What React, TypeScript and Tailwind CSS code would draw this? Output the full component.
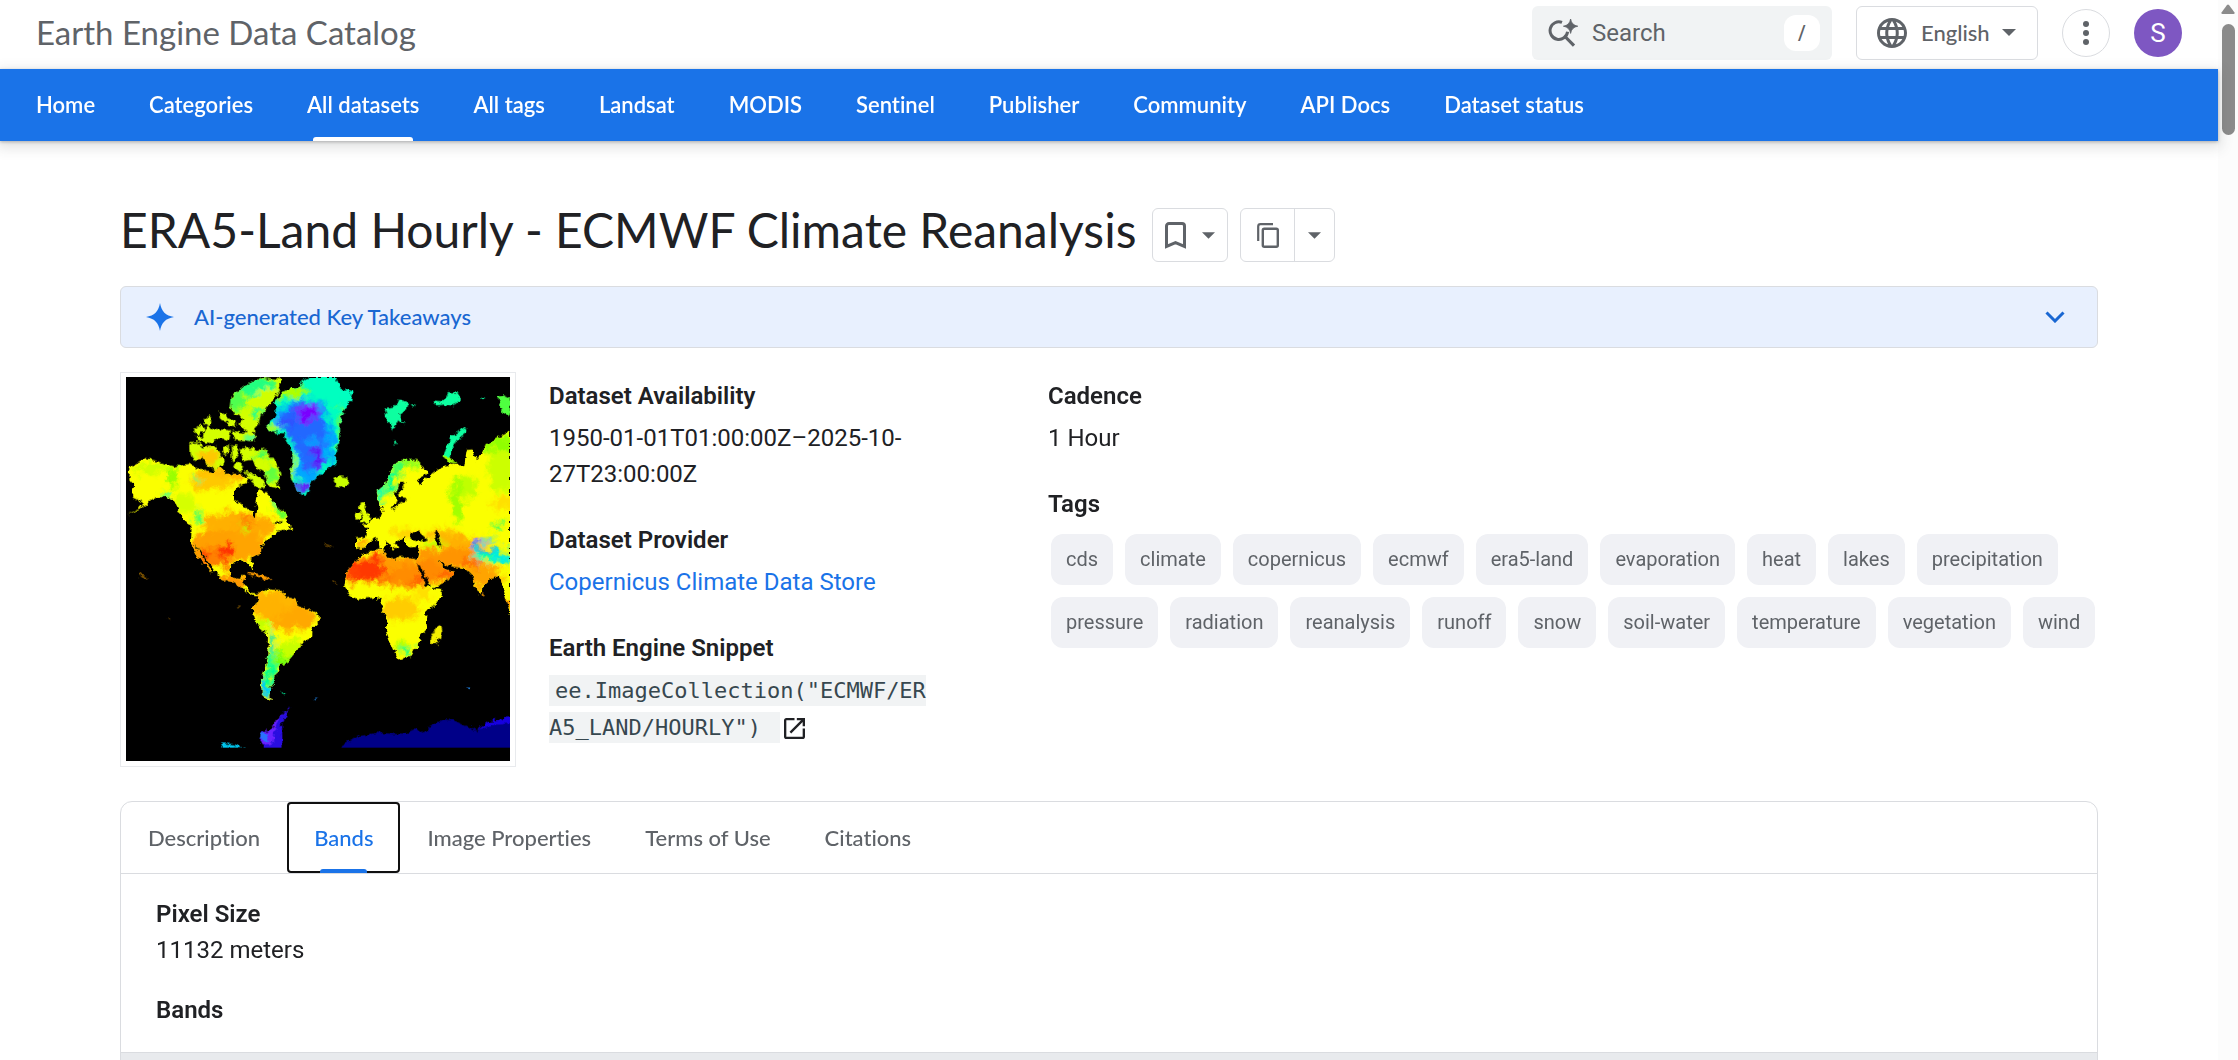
import React from "react";

const navItems = [
  "Home",
  "Categories",
  "All datasets",
  "All tags",
  "Landsat",
  "MODIS",
  "Sentinel",
  "Publisher",
  "Community",
  "API Docs",
  "Dataset status",
];

const tags = [
  "cds",
  "climate",
  "copernicus",
  "ecmwf",
  "era5-land",
  "evaporation",
  "heat",
  "lakes",
  "precipitation",
  "pressure",
  "radiation",
  "reanalysis",
  "runoff",
  "snow",
  "soil-water",
  "temperature",
  "vegetation",
  "wind",
];

const tabs = ["Description", "Bands", "Image Properties", "Terms of Use", "Citations"];

function Caret({ className = "w-[14px] h-[7px]" }: { className?: string }) {
  return (
    <svg viewBox="0 0 14 7" className={className} fill="#5f6368" aria-hidden="true">
      <path d="M0 0h14L7 7z" />
    </svg>
  );
}

function SearchSparkIcon() {
  return (
    <svg viewBox="0 0 30 28" className="h-7 w-[30px]" fill="none" aria-hidden="true">
      <path d="M14 3.400A8.800 8.800 0 1 0 19.600 12.800" stroke="#5f6368" strokeWidth="3" />
      <path d="M16.500 17l9.500 9.700" stroke="#5f6368" strokeWidth="3.200" />
      <path d="M22.600 0Q23.600 6.200 29.800 7.200 23.600 8.200 22.600 14.400 21.600 8.200 15.400 7.200 21.600 6.200 22.600 0z" fill="#5f6368" stroke="#5f6368" strokeWidth=".8" />
    </svg>
  );
}

function GlobeIcon() {
  return (
    <svg viewBox="2 2 20 20" className="h-[30px] w-[30px]" fill="#5f6368" aria-hidden="true">
      <path d="M11.99 2C6.47 2 2 6.48 2 12s4.47 10 9.99 10C17.52 22 22 17.52 22 12S17.52 2 11.99 2zm6.93 6h-2.95c-.32-1.25-.78-2.45-1.38-3.56 1.84.63 3.37 1.91 4.33 3.56zM12 4.04c.83 1.2 1.48 2.53 1.91 3.96h-3.82c.43-1.43 1.08-2.76 1.91-3.96zM4.26 14C4.1 13.36 4 12.69 4 12s.1-1.36.26-2h3.38c-.08.66-.14 1.32-.14 2s.06 1.34.14 2H4.26zm.82 2h2.95c.32 1.25.78 2.45 1.38 3.56-1.84-.63-3.37-1.9-4.33-3.56zm2.95-8H5.08c.96-1.66 2.49-2.93 4.33-3.56C8.81 5.55 8.35 6.75 8.03 8zM12 19.96c-.83-1.2-1.48-2.53-1.91-3.96h3.82c-.43 1.43-1.08 2.76-1.91 3.96zM14.34 14H9.66c-.09-.66-.16-1.32-.16-2s.07-1.35.16-2h4.68c.09.65.16 1.32.16 2s-.07 1.34-.16 2zm.25 5.56c.6-1.11 1.06-2.31 1.38-3.56h2.95c-.96 1.65-2.49 2.93-4.33 3.56zM16.36 14c.08-.66.14-1.32.14-2s-.06-1.34-.14-2h3.38c.16.64.26 1.31.26 2s-.1 1.36-.26 2h-3.38z" />
    </svg>
  );
}

const NORTH_AMERICA =
  "M60 330L72 312 105 294 150 305 190 320 235 312 270 325 300 338 330 322 352 345 385 340 400 352 425 348 412 368 385 378 372 400 372 418 392 432 412 445 425 452 428 474 438 474 442 445 436 425 442 405 446 390 465 395 482 412 500 440 520 455 535 472 522 484 500 484 488 492 512 490 525 480 548 508 530 508 505 512 490 530 468 540 455 560 452 580 430 592 422 600 432 625 424 630 414 606 392 604 365 612 358 625 362 652 378 660 398 645 404 648 396 668 412 680 420 698 440 700 458 694 448 708 430 708 408 695 395 680 368 668 335 655 320 640 308 620 285 590 262 560 250 548 308 635 302 636 262 585 243 550 245 500 228 490 212 462 198 432 172 410 140 412 118 424 90 448 48 468 84 448 102 428 66 410 72 375 58 358z";

const SOUTH_AMERICA =
  "M448 702L470 688 508 690 530 712 556 718 562 738 595 748 626 765 625 785 608 805 606 835 572 850 562 870 532 905 512 912 510 935 492 950 494 965 480 985 478 1010 492 1022 474 1022 456 1005 452 975 462 935 472 885 474 825 446 800 430 768 430 745 442 722z";

const GREENLAND =
  "M492 130L520 92 575 80 570 65 600 52 680 52 690 85 728 98 715 135 700 150 690 200 690 250 676 275 678 315 650 328 622 352 602 370 590 412 572 402 556 378 542 355 545 330 548 290 532 250 520 220 492 218 468 205 478 185 500 165z";

const EURASIA =
  "M738 535L768 530 772 505 758 500 790 475 812 470 818 455 805 430 800 395 828 370 850 315 882 298 915 300 955 335 945 350 920 358 928 375 968 342 990 325 1030 310 1062 320 1070 270 1090 268 1100 300 1125 260 1160 235 1200 215V765L1185 705 1168 645 1140 660 1120 680 1110 706 1098 685 1090 650 1065 625 1030 620 1005 612 985 600 1002 628 1032 635 1020 660 965 685 948 665 925 610 922 590 928 560 900 562 885 550 885 530 850 550 870 562 848 568 838 550 812 530 832 545 830 555 812 568 808 545 795 530 775 548 762 565 738 570z";

const AFRICA =
  "M758 585L790 572 822 568 826 585 858 600 870 590 922 600 940 640 965 685 998 690 985 725 950 752 948 780 952 805 930 830 925 852 905 890 862 898 845 860 828 812 830 770 815 745 815 720 800 712 742 718 715 700 703 680 710 635 730 610z";

const ARCTIC_CANADA =
  "M432 60L455 52 512 58 510 85 485 125 468 150 452 165 445 195 432 210 436 240 412 230 402 210 385 195 400 175 362 150 365 110 385 90zM280 180l20-15 8 25-20 12zM322 155l24 5 10 25-22-5zM352 175l24 4 2 20-22-4zM250 210l25-18 12 20-25 14zM290 200l35 8 35 2-5 32-25-8-30 15-35-5-12-16 28 2zM365 212l34 6 32 10 4 16-58-6zM240 250l22-4 15 16 42-4 12 25 14 25-28 24-28-15-5-22-20 4-12 4-10-22zM338 258l18-2 2 28-18-4zM365 258l14-6 8 26-18 28zM392 265l40-2 18 12 14-10 22 30 20 28 6 25-12 16 8 22-22-5-16-18-6-22-26-20-14-22-26 6zM380 305l16 8-4 24-20-14zM405 330l34 16 32 30-20 12-30-26zM440 52l6 40-20 30z";

function MapImage() {
  const cells: [number, number, number, number, string][] = [
    [330, 345, 70, 28, "#ffb800"],
    [300, 365, 60, 28, "#ffc800"],
    [370, 490, 90, 34, "#ffb000"],
    [430, 500, 60, 32, "#ffaa00"],
    [340, 560, 110, 48, "#ffa000"],
    [410, 560, 60, 40, "#ffa400"],
    [300, 590, 45, 30, "#ff8000"],
    [348, 572, 22, 18, "#ff3000"],
    [350, 610, 14, 20, "#ff5500"],
    [282, 585, 18, 10, "#ff4000"],
    [370, 660, 60, 20, "#ff9600"],
    [410, 485, 18, 8, "#ff7300"],
    [402, 502, 12, 8, "#b8ff00"],
    [130, 325, 50, 20, "#d0ff00"],
    [188, 345, 12, 38, "#90ff00"],
    [170, 402, 16, 8, "#20ffa0"],
    [225, 430, 30, 30, "#d5ff00"],
    [265, 470, 14, 22, "#50ff60"],
    [258, 355, 10, 8, "#60ff60"],
    [512, 445, 18, 32, "#60ff30"],
    [498, 425, 12, 14, "#20ffa0"],
    [520, 735, 110, 48, "#ffb600"],
    [550, 775, 80, 34, "#ffa800"],
    [480, 745, 50, 34, "#ffb200"],
    [545, 865, 45, 26, "#c8ff00"],
    [515, 905, 35, 26, "#70ff10"],
    [462, 795, 20, 14, "#c0ff00"],
    [484, 850, 7, 48, "#00e0d0"],
    [478, 940, 14, 60, "#00ff90"],
    [466, 985, 14, 28, "#00c8ff"],
    [482, 1018, 9, 7, "#2070ff"],
    [820, 625, 130, 46, "#ff9c00"],
    [900, 650, 70, 34, "#ff8c00"],
    [770, 630, 54, 30, "#ff3800"],
    [800, 595, 18, 14, "#ff3c00"],
    [735, 648, 26, 22, "#ff4000"],
    [820, 662, 30, 12, "#ff7200"],
    [920, 665, 24, 12, "#ff6400"],
    [870, 745, 60, 36, "#ffcc00"],
    [940, 705, 25, 20, "#ffe000"],
    [980, 625, 60, 40, "#ff8a00"],
    [1000, 648, 26, 8, "#ff5c00"],
    [955, 580, 36, 20, "#ff9800"],
    [1040, 590, 70, 32, "#ff9400"],
    [1085, 610, 32, 12, "#ff6c00"],
    [1120, 650, 60, 36, "#ffa400"],
    [1060, 545, 90, 18, "#ffb000"],
    [1000, 520, 50, 14, "#ffc000"],
    [890, 520, 50, 10, "#ffd000"],
    [760, 552, 20, 14, "#ffae00"],
    [1180, 430, 40, 20, "#ffe000"],
    [1040, 420, 17, 70, "#a0ff00"],
    [1075, 385, 26, 34, "#c0ff00"],
    [1180, 310, 45, 90, "#ccff00"],
    [1170, 250, 50, 24, "#90ff00"],
    [965, 550, 40, 9, "#c0ff00"],
    [860, 330, 18, 30, "#40ff60"],
    [838, 365, 14, 32, "#00ff90"],
    [812, 400, 16, 24, "#20ffa0"],
    [895, 310, 30, 14, "#80ff20"],
    [880, 862, 30, 20, "#b0ff00"],
    [892, 868, 17, 14, "#30ff70"],
    [1150, 590, 60, 18, "#00ffb0"],
    [1180, 592, 36, 18, "#00f0e0"],
    [1125, 575, 40, 6, "#20a0ff"],
    [1100, 558, 15, 10, "#3070ff"],
    [1130, 540, 34, 6, "#00d8f0"],
    [1165, 498, 18, 9, "#30ff60"],
  ];
  return (
    <svg
      viewBox="48 51 1152 1152"
      className="block aspect-square w-full bg-black"
      role="img"
      aria-label="World map of surface temperature"
    >
      <defs>
        <filter id="coast" x="0" y="0" width="1250" height="1250" filterUnits="userSpaceOnUse">
          <feTurbulence type="fractalNoise" baseFrequency="0.06" numOctaves="3" seed="4" result="n" />
          <feDisplacementMap in="SourceGraphic" in2="n" scale="20" xChannelSelector="R" yChannelSelector="G" />
          <feGaussianBlur stdDeviation="1.2" />
        </filter>
        <filter id="soft" x="0" y="0" width="1250" height="1250" filterUnits="userSpaceOnUse">
          <feGaussianBlur stdDeviation="6" result="b" />
          <feTurbulence type="fractalNoise" baseFrequency="0.035" numOctaves="4" seed="9" result="n" />
          <feDisplacementMap in="b" in2="n" scale="50" xChannelSelector="R" yChannelSelector="G" />
        </filter>
        <clipPath id="land">
          <path d={NORTH_AMERICA} />
          <path d={SOUTH_AMERICA} />
          <path d={EURASIA} />
          <path d={AFRICA} />
        </clipPath>
        <clipPath id="greenland">
          <path d={GREENLAND} />
        </clipPath>
        <clipPath id="arctic">
          <path d={ARCTIC_CANADA} />
        </clipPath>
      </defs>
      <g filter="url(#coast)">
        <g clipPath="url(#land)">
          <rect x="0" y="0" width="1250" height="1250" fill="#fbff00" />
          <g filter="url(#soft)">
            {cells.map(([cx, cy, rx, ry, fill], i) => (
              <ellipse key={i} cx={cx} cy={cy} rx={rx} ry={ry} fill={fill} />
            ))}
          </g>
        </g>
        <g clipPath="url(#arctic)">
          <rect x="200" y="40" width="350" height="400" fill="#d4ff00" />
          <g filter="url(#soft)">
            <ellipse cx="440" cy="80" rx="60" ry="30" fill="#20ff80" />
            <ellipse cx="380" cy="130" rx="22" ry="40" fill="#50ff50" />
            <ellipse cx="470" cy="110" rx="30" ry="20" fill="#d0ff00" />
            <ellipse cx="440" cy="160" rx="14" ry="20" fill="#20ff90" />
            <ellipse cx="425" cy="235" rx="22" ry="9" fill="#40ffa0" />
            <ellipse cx="300" cy="290" rx="40" ry="28" fill="#ffc800" />
            <ellipse cx="460" cy="285" rx="20" ry="14" fill="#30ff60" />
            <ellipse cx="490" cy="340" rx="20" ry="22" fill="#60ff40" />
          </g>
        </g>
        <g clipPath="url(#greenland)">
          <rect x="440" y="40" width="300" height="400" fill="#00ffc0" />
          <g filter="url(#soft)">
            <ellipse cx="530" cy="95" rx="60" ry="22" fill="#b0ff00" />
            <ellipse cx="485" cy="205" rx="26" ry="16" fill="#a0ff20" />
            <ellipse cx="695" cy="210" rx="10" ry="80" fill="#70ff40" />
            <ellipse cx="545" cy="330" rx="10" ry="55" fill="#c0ff00" />
            <path d="M505 150L550 120 635 125 660 190 676 250 662 300 625 345 590 380 560 345 562 290 540 230 490 190z" fill="#00a8ff" />
            <path d="M505 170L560 125 630 140 648 210 648 310 600 345 580 300 550 250 510 200z" fill="#2468ff" />
            <ellipse cx="605" cy="245" rx="28" ry="14" fill="#1098ff" />
            <ellipse cx="594" cy="158" rx="34" ry="24" fill="#7a00ff" />
            <ellipse cx="622" cy="295" rx="16" ry="36" fill="#5a18f8" />
            <ellipse cx="530" cy="185" rx="24" ry="16" fill="#3050ff" />
            <ellipse cx="580" cy="384" rx="16" ry="14" fill="#6a10ff" />
          </g>
        </g>
        {/* Arctic islands */}
        <g fill="#10ffa0">
          <path d="M824 145L850 140 868 122 895 132 890 150 868 160 884 195 862 180 848 210 832 185z" />
          <path d="M970 122l30 2 12-28 30 2 12 20-30 22-22-6-24 2z" />
          <path d="M1072 205L1045 215 1022 228 1012 262 1000 290 1018 300 1026 262 1040 240 1070 218z" />
          <path d="M1165 110l20-4 15 8v52l-20-10-10-24z" fill="#50ff40" />
          <path d="M995 285l24 10 28 16-30-4z" fill="#a0ff00" />
          <path d="M905 130l14 6-8 4zM1115 108l8 8-8 4zM852 242l10 8-8 4z" />
        </g>
        {/* Iceland, Britain and Ireland */}
        <path d="M675 355l14-6 22 2 8 12-12 16-22 4-14-16z" fill="#c8ff00" />
        <path d="M735 462l18-6 2 16-18 8zM752 428l14-4-2 24 16 24-2 14-28 4 10-20-10-20z" fill="#e4ff00" />
        {/* Madagascar, Caribbean, Sri Lanka and Indonesia */}
        <path d="M990 795l4 18-14 38-18 2 2-26 14-24z" fill="#f4f000" />
        <path d="M415 636l40 8 30 14-20 2-26-12-22-6zM1116 695l12 14-8 4zM1184 715l16 8v30z" fill="#ff9d00" />
        <path d="M88 638l22 14-6 6-16-12zM640 550l28 8-2 4-24-8zM668 660l12 10-6 2zM380 738l14 4-8 4zM170 776l12 2-6 3z" fill="#7a5200" />
        {/* Inland seas and gulfs */}
        <g fill="#000">
          <path d="M878 362l6 16-18 20 6 14 24 2-12 10-18 6-14 22-4-6 12-26-6-22z" />
          <path d="M902 518l22-4 28 24-20 6-30-4z" />
          <path d="M970 512l18 4-2 20 10 24-18-8-4-20z" />
          <path d="M922 610l12 12 26 56-10 2-24-50z" />
        </g>
        {/* Antarctica */}
        <path d="M692 1161L740 1130 800 1118 880 1124 920 1106 942 1120 962 1098 1000 1078 1030 1080 1072 1100 1100 1115 1140 1085 1200 1072 1230 1072 1230 1180H692z" fill="#000088" />
        <path d="M1100 1112L1140 1083 1185 1076 1190 1064 1205 1078V1086L1150 1092z" fill="#1800e0" />
        <path d="M540 1046L520 1056 500 1085 486 1108 455 1118 448 1140 462 1158 462 1175 518 1175 516 1090z" fill="#2a10e0" />
        <path d="M538 1048L510 1068 496 1102 488 1150 458 1156 450 1135 470 1110 488 1100 500 1078z" fill="#6a20ff" />
        <path d="M452 1118l26 4-6 22-22-6z" fill="#2c70ff" />
        <path d="M330 1165l8-15 30 2 36 13z" fill="#00c8f0" />
        <path d="M514 996l14 2-8 6z" fill="#00e090" />
        <path d="M1068 980l12 0-4 8zM612 1014l10 4-6 4z" fill="#2080e0" />
      </g>
      <rect x="48" y="1163" width="1152" height="40" fill="#000" />
    </svg>
  );
}

function Heading({ children }: { children: React.ReactNode }) {
  return <dt className="font-semibold">{children}</dt>;
}

export default function App() {
  return (
    <div className="flex h-screen overflow-hidden bg-white font-['Roboto',sans-serif] text-2xl leading-9 text-[#202124] [font-variant-ligatures:none]">
      <div className="min-w-0 flex-1">
        <header className="flex h-[69px] items-center justify-between px-9 pb-1">
          <a href="#" className="pb-0.5 font-['Lato',sans-serif] text-[33px] text-[#5f6368]">
            Earth Engine Data Catalog
          </a>
          <div className="flex items-center gap-6">
            <label className="flex h-[54px] w-[300px] items-center gap-3.5 rounded-md bg-[#f1f3f4] pl-4 pr-3">
              <SearchSparkIcon />
              <input
                type="search"
                aria-label="Search"
                placeholder="Search"
                className="min-w-0 flex-1 bg-transparent text-2xl outline-none placeholder:text-[#5f6368]"
              />
              <kbd className="flex h-9 w-9 items-center justify-center rounded-xl bg-white font-['Roboto',sans-serif] text-xl font-medium text-[#5f6368]">
                /
              </kbd>
            </label>
            <button
              type="button"
              className="flex h-[54px] w-[182px] items-center rounded-md border border-[#dadce0] pl-5 font-['Lato',sans-serif] text-[22px] font-medium text-[#5f6368]"
            >
              <GlobeIcon />
              <span className="ml-3.5 mr-3">English</span>
              <Caret />
            </button>
            <button
              type="button"
              aria-label="More options"
              className="flex h-12 w-12 items-center justify-center rounded-full border border-[#dadce0]"
            >
              <svg viewBox="0 0 6 24" className="h-6 w-1.5" fill="#5f6368" aria-hidden="true">
                <circle cx="3" cy="3" r="3" />
                <circle cx="3" cy="12" r="3" />
                <circle cx="3" cy="21" r="3" />
              </svg>
            </button>
            <button
              type="button"
              aria-label="Account"
              className="flex h-12 w-12 items-center justify-center rounded-full bg-[#7e57c2] text-[26px] text-white"
            >
              S
            </button>
          </div>
        </header>

        <nav className="relative flex h-[72px] bg-[#1a73e8] pl-[9px] font-['Lato',sans-serif] text-[22px] font-semibold text-white shadow-[0_1px_3px_0_rgba(60,64,67,0.35),0_4px_12px_3px_rgba(60,64,67,0.15)]">
          {navItems.map((item) => (
            <a key={item} href="#" className="relative flex items-center px-[27px]">
              {item}
              {item === "All datasets" && (
                <span className="absolute inset-x-[33px] bottom-0 h-1 rounded-t-[3px] bg-white" />
              )}
            </a>
          ))}
        </nav>

        <main className="px-[120px] pt-[57px]">
          <div className="flex items-center">
            <h1 className="font-['Lato',sans-serif] text-5xl leading-[64px]">
              ERA5-Land Hourly - ECMWF Climate Reanalysis
            </h1>
            <button
              type="button"
              aria-label="Save to bookmarks"
              className="ml-4 mt-2.5 flex h-[54px] items-center gap-4 rounded-md border border-[#dadce0] px-3"
            >
              <svg viewBox="0 0 21 27" className="h-[27px] w-[21px]" fill="none" aria-hidden="true">
                <path d="M1.500 24.500V4A2.500 2.500 0 0 1 4 1.500h13A2.500 2.500 0 0 1 19.500 4v20.500L10.500 20.700z" stroke="#5f6368" strokeWidth="3" />
              </svg>
              <Caret className="h-[7px] w-[13px]" />
            </button>
            <div className="ml-3 mt-2.5 flex h-[54px] rounded-md border border-[#dadce0]">
              <button
                type="button"
                aria-label="Copy page"
                className="flex w-[54px] items-center justify-center border-r border-[#dadce0]"
              >
                <svg viewBox="0 0 22 25" className="h-[25px] w-[22px]" fill="none" stroke="#5f6368" aria-hidden="true">
                  <path d="M1.200 18V3.500A2.300 2.300 0 0 1 3.500 1.200H16" strokeWidth="2.200" />
                  <rect x="5.800" y="5.800" width="15" height="18" rx="1.500" strokeWidth="2.400" />
                </svg>
              </button>
              <button type="button" aria-label="Copy options" className="flex w-[39px] items-center justify-center">
                <Caret className="h-[7px] w-[13px]" />
              </button>
            </div>
          </div>

          <button
            type="button"
            className="mt-6 flex h-[62px] w-full items-center rounded-md border border-[#dadce0] bg-[#e8f0fe] pl-[25px] pr-8 font-['Lato',sans-serif] text-[22px] font-medium text-[#1967d2]"
          >
            <svg viewBox="0 0 28 28" className="h-7 w-7" fill="#1a73e8" aria-hidden="true">
              <path d="M14 0C15.500 8.500 19.500 12.500 28 14 19.500 15.500 15.500 19.500 14 28 12.500 19.500 8.500 15.500 0 14 8.500 12.500 12.500 8.500 14 0z" />
            </svg>
            <span className="ml-5 flex-1 text-left">AI-generated Key Takeaways</span>
            <svg viewBox="0 0 20 12" className="h-3 w-5" fill="none" aria-hidden="true">
              <path d="M1.500 1.500L10 10l8.500-8.500" stroke="#1967d2" strokeWidth="3" />
            </svg>
          </button>

          <section className="mt-6 flex items-start">
            <div className="w-[396px] shrink-0 border border-[#e8eaed] px-[5px] pb-[5px] pt-1">
              <MapImage />
            </div>
            <dl className="ml-[33px] mt-1.5 flex w-[499px] shrink-0 flex-col gap-[30px] pr-[119px]">
              <div className="flex flex-col gap-1.5">
                <Heading>Dataset Availability</Heading>
                <dd>1950-01-01T01:00:00Z–2025-10-27T23:00:00Z</dd>
              </div>
              <div className="flex flex-col gap-1.5">
                <Heading>Dataset Provider</Heading>
                <dd>
                  <a href="#" className="text-[#1a73e8]">
                    Copernicus Climate Data Store
                  </a>
                </dd>
              </div>
              <div className="flex flex-col gap-1.5">
                <Heading>Earth Engine Snippet</Heading>
                <dd>
                  <code className="break-all bg-[#f1f3f4] px-1.5 py-[3px] font-['DejaVu_Sans_Mono',monospace] text-[22px] text-[#37474f]">
                    ee.ImageCollection("ECMWF/ERA5_LAND/HOURLY")&nbsp;
                  </code>
                  <a href="#" aria-label="Open in Code Editor" className="ml-1 inline-block align-middle">
                    <svg viewBox="3 3 18 18" className="h-[21px] w-[21px]" fill="#202124" aria-hidden="true">
                      <path d="M19 19H5V5h7V3H5c-1.110 0-2 .9-2 2v14c0 1.100.89 2 2 2h14c1.100 0 2-.9 2-2v-7h-2v7zM14 3v2h3.590l-9.830 9.830 1.410 1.410L19 6.410V10h2V3h-7z" />
                    </svg>
                  </a>
                </dd>
              </div>
            </dl>
            <dl className="mt-1.5 flex min-w-0 flex-1 flex-col gap-[30px]">
              <div className="flex flex-col gap-1.5">
                <Heading>Cadence</Heading>
                <dd>1 Hour</dd>
              </div>
              <div className="flex flex-col gap-3">
                <Heading>Tags</Heading>
                <dd className="flex flex-wrap gap-3 pl-[3px]">
                  {tags.map((tag) => (
                    <a
                      key={tag}
                      href="#"
                      className="flex h-[51px] items-center rounded-xl bg-[#f0f1f5] px-[15px] pb-0.5 text-xl text-[#5f6368]"
                    >
                      {tag}
                    </a>
                  ))}
                </dd>
              </div>
            </dl>
          </section>

          <section className="mt-[34px] rounded-t-xl border border-[#dadce0]">
            <div role="tablist" className="flex h-[72px] border-b border-[#dadce0] font-['Lato',sans-serif] text-[22px] font-medium">
              {tabs.map((tab) =>
                tab === "Bands" ? (
                  <button
                    key={tab}
                    type="button"
                    role="tab"
                    aria-selected="true"
                    className="relative rounded-sm px-[27px] text-[#1a73e8] outline-2 -outline-offset-2 outline-[#101010]"
                  >
                    {tab}
                    <span className="absolute inset-x-[33px] bottom-0 h-1 rounded-t-[3px] bg-[#1a73e8]" />
                  </button>
                ) : (
                  <button key={tab} type="button" role="tab" aria-selected="false" className="px-[27px] text-[#5f6368]">
                    {tab}
                  </button>
                ),
              )}
            </div>
            <div role="tabpanel" className="pt-[22px]">
              <h2 className="px-[35px] font-semibold">Pixel Size</h2>
              <p className="px-[35px]">11132 meters</p>
              <h2 className="mt-6 px-[35px] font-semibold">Bands</h2>
              <div className="mt-6 h-12 border-t border-[#dadce0] bg-[#e8eaed]" />
            </div>
          </section>
        </main>
      </div>

      <div className="flex w-5 shrink-0 flex-col items-center bg-[#fcfcfc] pt-1" aria-hidden="true">
        <svg viewBox="0 0 14 10" className="h-2.5 w-3.5" fill="#8b8b8b">
          <path d="M6 1Q7 0 8 1L13.500 8.500Q14 10 12.500 10H1.500Q0 10 .5 8.500z" />
        </svg>
        <div className="mt-2.5 h-[111px] w-[13px] rounded-full bg-[#8b8b8b]" />
      </div>
    </div>
  );
}
